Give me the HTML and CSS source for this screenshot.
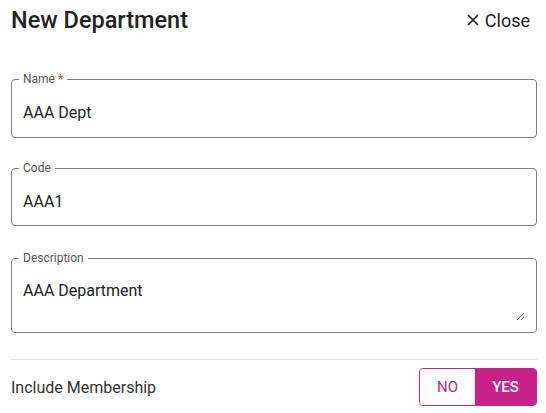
FILE: index.html
```html
<!DOCTYPE html>
<html lang="en">
<head>
<meta charset="utf-8">
<title>New Department</title>
<link rel="stylesheet" href="styles.css">
</head>
<body>
<div class="dialog">
  <header class="header">
    <h1 class="title">New Department</h1>
    <button class="close" type="button">
      <svg class="close-icon" width="12" height="12" viewBox="0 0 12 12" aria-hidden="true">
        <path d="M1 1 L11 11 M11 1 L1 11" stroke="#222" stroke-width="1.7" fill="none"/>
      </svg>
      <span>Close</span>
    </button>
  </header>
  <form class="form">
    <fieldset class="field field-name">
      <legend class="field-label">Name <span class="req">*</span></legend>
      <input class="field-input" type="text" value="AAA Dept">
    </fieldset>
    <fieldset class="field field-code">
      <legend class="field-label">Code</legend>
      <input class="field-input" type="text" value="AAA1">
    </fieldset>
    <fieldset class="field field-area">
      <legend class="field-label">Description</legend>
      <textarea class="field-textarea" rows="2">AAA Department</textarea>
    </fieldset>
    <div class="divider"></div>
    <div class="row">
      <span class="row-label">Include Membership</span>
      <div class="toggle">
        <span class="toggle-opt toggle-no">NO</span>
        <span class="toggle-opt toggle-yes">YES</span>
      </div>
    </div>
  </form>
</div>
</body>
</html>
```
FILE: styles.css
```css
* { box-sizing: border-box; }
html, body { margin: 0; padding: 0; background: #fff; }
body {
  font-family: Roboto, "Liberation Sans", Arial, sans-serif;
  color: #333;
}
.dialog {
  padding: 0 9px 0 11px;
}
.header {
  height: 40px;
  display: flex;
  align-items: center;
  justify-content: space-between;
}
.title {
  margin: 0;
  font-size: 23.5px;
  font-weight: 500;
  color: #222;
  line-height: 28px;
}
.close {
  display: flex;
  align-items: center;
  gap: 6px;
  background: none;
  border: 0;
  padding: 0 7px 0 0;
  font: inherit;
  font-size: 18px;
  color: #222;
  cursor: pointer;
}
.close-icon { display: block; }
.form {
  margin-top: 32px;
  display: flex;
  flex-direction: column;
}
.field {
  margin: 0;
  border: 1px solid #7a7e85;
  border-radius: 4px;
  padding: 17px 11px 14px 11px;
  min-width: 0;
}
.field-name { margin-bottom: 23px; }
.field-code { padding-bottom: 13px; margin-bottom: 25px; }
.field-label {
  margin-left: -4px;
  padding: 0 4px;
  font-size: 12px;
  line-height: 14px;
  color: #555;
}
.req { color: #e53935; }
.field-input {
  display: block;
  width: 100%;
  border: 0;
  outline: none;
  padding: 0;
  margin: 0;
  font: inherit;
  font-size: 16px;
  line-height: 20px;
  height: 20px;
  color: #222;
  background: transparent;
}
.field-area {
  padding: 16px 11px 11px 11px;
  margin-bottom: 26px;
}
.field-textarea {
  display: block;
  width: 100%;
  border: 0;
  outline: none;
  padding: 0;
  margin: 0;
  font: inherit;
  font-size: 16px;
  line-height: 20px;
  height: 40px;
  color: #222;
  background: transparent;
}
.divider {
  height: 1px;
  background: #e2e2e8;
}
.row {
  margin-top: 8px;
  display: flex;
  align-items: center;
  justify-content: space-between;
}
.row-label {
  font-size: 16px;
  color: #333;
}
.toggle {
  display: flex;
  width: 118px;
  height: 38px;
  border: 1px solid #c8228a;
  border-radius: 4px;
  overflow: hidden;
}
.toggle-opt {
  display: flex;
  align-items: center;
  justify-content: center;
  font-size: 15px;
}
.toggle-no {
  width: 55px;
  color: #c8228a;
  background: #fff;
  box-shadow: inset -4px 0 4px -3px rgba(0,0,0,0.12);
}
.toggle-yes {
  flex: 1;
  color: #fff;
  font-weight: 500;
  background: #c8228a;
}
```
